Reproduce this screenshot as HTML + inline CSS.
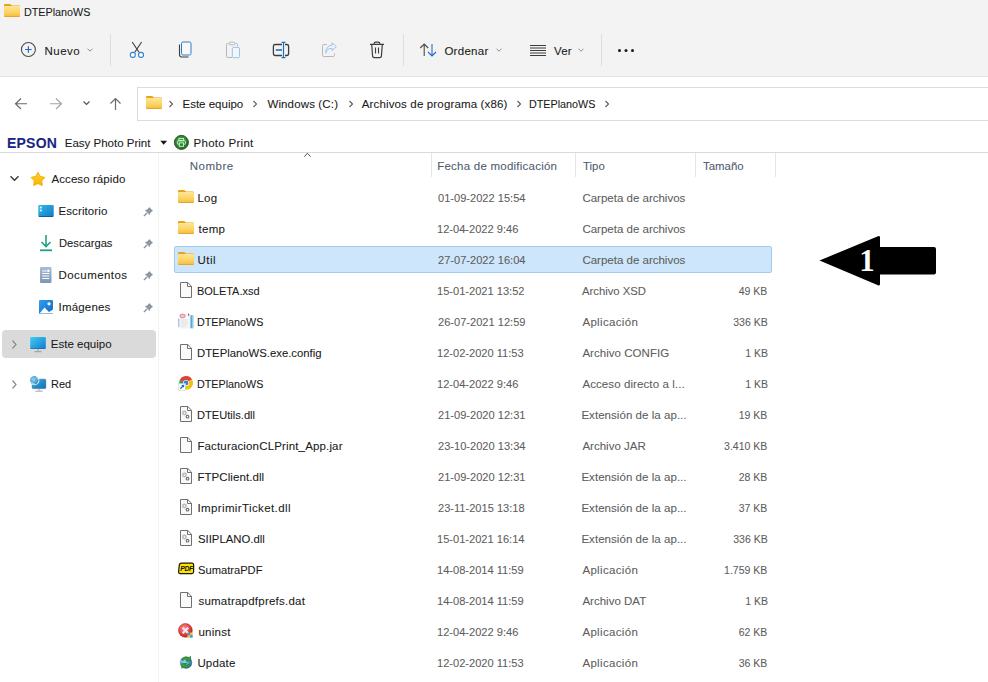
<!DOCTYPE html>
<html><head><meta charset="utf-8"><style>
html,body{margin:0;padding:0;width:988px;height:682px;overflow:hidden;background:#fff;position:relative;font-family:"Liberation Sans",sans-serif;font-size:12px;}
.t{position:absolute;white-space:pre;line-height:16px;font-family:"Liberation Sans",sans-serif;font-size:12px;-webkit-text-stroke:0.08px currentColor;}
.a{position:absolute;}
svg{position:absolute;overflow:visible;}

</style></head><body>
<!-- backgrounds -->
<div class="a" style="left:0;top:0;width:988px;height:76px;background:#f3f3f3"></div>
<div class="a" style="left:0;top:76px;width:988px;height:1px;background:#e3e3e3"></div>
<!-- toolbar separators -->
<div class="a" style="left:110px;top:34px;width:1px;height:32px;background:#dedede"></div>
<div class="a" style="left:403px;top:34px;width:1px;height:32px;background:#dedede"></div>
<div class="a" style="left:601px;top:34px;width:1px;height:32px;background:#dedede"></div>
<!-- address box -->
<div class="a" style="left:137px;top:87px;width:860px;height:32px;border:1px solid #dcdcdc;background:#fff"></div>
<!-- epson bar bottom -->
<div class="a" style="left:0;top:152px;width:988px;height:1px;background:#dadada"></div>
<!-- nav pane separator -->
<div class="a" style="left:158px;top:153px;width:1px;height:529px;background:#f3f3f3"></div>
<!-- este equipo highlight -->
<div class="a" style="left:2px;top:330px;width:154px;height:28px;background:#dadada;border-radius:4px"></div>
<!-- header column separators -->
<div class="a" style="left:431px;top:153px;width:1px;height:24px;background:#e5e5e5"></div>
<div class="a" style="left:575px;top:153px;width:1px;height:24px;background:#e5e5e5"></div>
<div class="a" style="left:695px;top:153px;width:1px;height:24px;background:#e5e5e5"></div>
<div class="a" style="left:775px;top:153px;width:1px;height:24px;background:#e5e5e5"></div>
<!-- selected row -->
<div class="a" style="left:174px;top:246px;width:596px;height:25px;background:#cde6fb;border:1px solid #a2cbee;border-radius:2px"></div>
<!-- shared defs -->
<svg width="0" height="0" style="left:0;top:0">
 <defs>
  <linearGradient id="fgrad" x1="0" y1="0" x2="0" y2="1"><stop offset="0" stop-color="#ffe596"/><stop offset="0.6" stop-color="#fbd25e"/><stop offset="1" stop-color="#f3bb3a"/></linearGradient>
  <symbol id="folder" viewBox="0 0 16 13">
   <path d="M0 1.3Q0 0 1.3 0H5.6Q6.4 0 7 .6L8 1.6H14.7Q16 1.6 16 2.9V4H0Z" fill="#e9a319"/>
   <rect x="0" y="2.1" width="16" height="10.9" rx="1.1" fill="url(#fgrad)"/>
   <rect x="0.3" y="12" width="15.4" height="1" rx=".5" fill="#dda032" opacity=".8"/>
  </symbol>
  <symbol id="blank" viewBox="0 0 16 16">
   <path d="M2.5 .5H9.8L13.5 4.2V15.5H2.5Z" fill="#fafafa" stroke="#707070" stroke-width="1"/>
   <path d="M9.5 .5V4.5H13.5" fill="none" stroke="#707070" stroke-width="1"/>
  </symbol>
  <symbol id="dll" viewBox="0 0 16 16">
   <path d="M2.5 .5H9.8L13.5 4.2V15.5H2.5Z" fill="#fafafa" stroke="#707070" stroke-width="1"/>
   <path d="M9.5 .5V4.5H13.5" fill="none" stroke="#707070" stroke-width="1"/>
   <circle cx="6.4" cy="7" r="2.4" fill="#b4b8bc"/><circle cx="6.4" cy="7" r=".9" fill="#f4f4f4"/>
   <circle cx="9.5" cy="10.7" r="1.9" fill="#707070"/><circle cx="9.5" cy="10.7" r=".8" fill="#fff"/>
  </symbol>
  <symbol id="pin" viewBox="-.3 -.3 10.6 10.6">
   <path d="M5.6 .6L9.4 4.4L8.3 4.9L6.6 6.6L6.5 8.6L1.4 3.5L3.4 3.4L5.1 1.7Z" fill="#8e969e"/>
   <path d="M3.6 6.4L.6 9.4" stroke="#8e969e" stroke-width="1.3"/>
  </symbol>
 </defs>
</svg>
<!-- title folder -->
<svg style="left:4px;top:4px" width="16" height="13"><use href="#folder"/></svg>
<!-- Nuevo icon -->
<svg style="left:20px;top:42px" width="16" height="16" viewBox="0 0 16 16">
 <circle cx="8.4" cy="7.5" r="7" fill="none" stroke="#4a4a4a" stroke-width="1.1"/>
 <path d="M8.4 4.2V10.8M5.1 7.5H11.7" stroke="#1f6fc0" stroke-width="1.2"/>
</svg>
<svg style="left:86px;top:47px" width="8" height="6" viewBox="0 0 8 6"><path d="M1.5 1.7L4 4.2L6.5 1.7" fill="none" stroke="#8c8c8c" stroke-width="1"/></svg>
<!-- cut -->
<svg style="left:128px;top:41px" width="18" height="18" viewBox="0 0 18 18">
 <path d="M4.2 1L11 11.2M13.6 1L6.8 11.2" stroke="#3d3d3d" stroke-width="1.1"/>
 <circle cx="4.8" cy="13.9" r="2.5" fill="#fff" stroke="#3282cc" stroke-width="1.1"/>
 <circle cx="13" cy="13.9" r="2.5" fill="#fff" stroke="#3282cc" stroke-width="1.1"/>
</svg>
<!-- copy -->
<svg style="left:178px;top:41px" width="16" height="18" viewBox="0 0 16 18">
 <path d="M1.5 3.5V13.8Q1.5 16 3.7 16H10.5" fill="none" stroke="#3d3d3d" stroke-width="1.1"/>
 <rect x="3.5" y="1" width="9.5" height="13" rx="1.6" fill="#f8f8f8" stroke="#2f7cc8" stroke-width="1"/>
</svg>
<!-- paste disabled -->
<svg style="left:225px;top:41px" width="16" height="18" viewBox="0 0 16 18">
 <path d="M3.5 2.5H2.6Q1.5 2.5 1.5 3.6V15.3Q1.5 16.5 2.6 16.5H7M10.5 2.5H11.4Q12.5 2.5 12.5 3.6V5.5" fill="none" stroke="#b5b5b5" stroke-width="1"/>
 <rect x="4" y="1.2" width="6" height="2.6" rx="1.2" fill="none" stroke="#b5b5b5" stroke-width="1"/>
 <rect x="7.3" y="6.4" width="7.2" height="10.3" rx="1.3" fill="#f0f6fc" stroke="#9cc3e6" stroke-width="1"/>
</svg>
<!-- rename -->
<svg style="left:272px;top:41px" width="18" height="18" viewBox="0 0 18 18">
 <path d="M10 3.5H3.2Q1.4 3.5 1.4 5.3V12.6Q1.4 14.5 3.2 14.5H10M13 3.5H14.8Q16.6 3.5 16.6 5.3V12.6Q16.6 14.5 14.8 14.5H13" fill="none" stroke="#3d3d3d" stroke-width="1.3"/>
 <path d="M11.5 1.3V16.7M9.6 1.3H13.4M9.6 16.7H13.4" stroke="#1f6fc0" stroke-width="1.2"/>
 <path d="M3.8 9H10" stroke="#1f6fc0" stroke-width="1.6"/>
</svg>
<!-- share disabled -->
<svg style="left:321px;top:42px" width="17" height="16" viewBox="0 0 17 16">
 <path d="M6 2.5H2.8Q1.5 2.5 1.5 3.8V13.2Q1.5 14.5 2.8 14.5H12.2Q13.5 14.5 13.5 13.2V11.5" fill="none" stroke="#b8b8b8" stroke-width="1"/>
 <path d="M4.8 11.2Q5.5 6.5 11 6.3V8.6L15.4 4.6L11 .8V3.1Q5 3.6 4.8 11.2Z" fill="#eef4fa" stroke="#9cc3e6" stroke-width="1"/>
</svg>
<!-- delete -->
<svg style="left:369px;top:41px" width="16" height="18" viewBox="0 0 16 18">
 <path d="M1 3.4H15M5.2 3.4V2.6Q5.2 1.2 6.6 1.2H9.4Q10.8 1.2 10.8 2.6V3.4" fill="none" stroke="#3d3d3d" stroke-width="1.2"/>
 <path d="M2.7 3.4L3.6 15.2Q3.8 16.6 5.2 16.6H10.8Q12.2 16.6 12.4 15.2L13.3 3.4" fill="none" stroke="#3d3d3d" stroke-width="1.2"/>
 <path d="M6.5 6.6V12.5M9.5 6.6V12.5" stroke="#3d3d3d" stroke-width="1.1"/>
</svg>
<!-- sort -->
<svg style="left:419px;top:42px" width="18" height="16" viewBox="0 0 18 16">
 <path d="M5.2 2V14M1.2 6L5.2 2L9.2 6" fill="none" stroke="#4a4a4a" stroke-width="1.1"/>
 <path d="M13 2V14M9 10L13 14L17 10" fill="none" stroke="#1f6fc0" stroke-width="1.1"/>
</svg>
<svg style="left:495px;top:47px" width="8" height="6" viewBox="0 0 8 6"><path d="M1.5 1.7L4 4.2L6.5 1.7" fill="none" stroke="#8c8c8c" stroke-width="1"/></svg>
<!-- view -->
<svg style="left:529px;top:44px" width="18" height="13" viewBox="0 0 18 13">
 <path d="M1 1.5H17M1 4H17M1 6.5H17M1 9H17M1 11.5H17" stroke="#3d3d3d" stroke-width="1"/>
</svg>
<svg style="left:577px;top:47px" width="8" height="6" viewBox="0 0 8 6"><path d="M1.5 1.7L4 4.2L6.5 1.7" fill="none" stroke="#8c8c8c" stroke-width="1"/></svg>
<!-- more -->
<svg style="left:616px;top:47px" width="20" height="7" viewBox="0 0 20 7">
 <circle cx="3.5" cy="3.5" r="1.5" fill="#1a1a1a"/><circle cx="10" cy="3.5" r="1.5" fill="#1a1a1a"/><circle cx="16.5" cy="3.5" r="1.5" fill="#1a1a1a"/>
</svg>
<!-- nav arrows -->
<svg style="left:13px;top:96px" width="16" height="16" viewBox="0 0 16 16">
 <path d="M2.5 7.75H14M8 2.5L2.5 7.75L8 13" fill="none" stroke="#6a6a6a" stroke-width="1.2"/>
</svg>
<svg style="left:48px;top:96px" width="16" height="16" viewBox="0 0 16 16">
 <path d="M2 7.75H13.5M8 2.5L13.5 7.75L8 13" fill="none" stroke="#a5a5a5" stroke-width="1.2"/>
</svg>
<svg style="left:81px;top:99px" width="10" height="8" viewBox="0 0 10 8">
 <path d="M2.5 2.5L5.5 5.5L8.5 2.5" fill="none" stroke="#555" stroke-width="1.2"/>
</svg>
<svg style="left:108px;top:96px" width="16" height="16" viewBox="0 0 16 16">
 <path d="M7.5 2.5V14M2.5 7.5L7.5 2.5L12.5 7.5" fill="none" stroke="#6a6a6a" stroke-width="1.2"/>
</svg>
<!-- address folder + chevrons -->
<svg style="left:146px;top:96px" width="16" height="13"><use href="#folder"/></svg>
<svg style="left:167px;top:100px" width="8" height="9" viewBox="0 0 8 9"><path d="M2.5 1L5.5 4L2.5 7" fill="none" stroke="#5a5a5a" stroke-width="1.1"/></svg>
<svg style="left:251px;top:100px" width="8" height="9" viewBox="0 0 8 9"><path d="M2.5 1L5.5 4L2.5 7" fill="none" stroke="#5a5a5a" stroke-width="1.1"/></svg>
<svg style="left:347px;top:100px" width="8" height="9" viewBox="0 0 8 9"><path d="M2.5 1L5.5 4L2.5 7" fill="none" stroke="#5a5a5a" stroke-width="1.1"/></svg>
<svg style="left:515px;top:100px" width="8" height="9" viewBox="0 0 8 9"><path d="M2.5 1L5.5 4L2.5 7" fill="none" stroke="#5a5a5a" stroke-width="1.1"/></svg>
<svg style="left:603px;top:100px" width="8" height="9" viewBox="0 0 8 9"><path d="M2.5 1L5.5 4L2.5 7" fill="none" stroke="#5a5a5a" stroke-width="1.1"/></svg>
<!-- epson triangle + printer -->
<svg style="left:160px;top:140px" width="8" height="6" viewBox="0 0 8 6"><path d="M.3 .8H7.1L3.7 4.8Z" fill="#1a1a1a"/></svg>
<svg style="left:173px;top:134px" width="17" height="17" viewBox="0 0 17 17">
 <defs><radialGradient id="gg" cx=".45" cy=".4" r=".65"><stop offset="0" stop-color="#3aa83a"/><stop offset="1" stop-color="#1f6e22"/></radialGradient></defs>
 <circle cx="8.4" cy="8.4" r="7" fill="url(#gg)" stroke="#2f4a30" stroke-width="1"/>
 <rect x="5.9" y="4.4" width="4.8" height="2.2" fill="none" stroke="#d6f4d6" stroke-width=".9"/>
 <rect x="4.4" y="6.8" width="8" height="3.4" rx=".6" fill="none" stroke="#d6f4d6" stroke-width=".9"/>
 <rect x="6.3" y="8.9" width="4.2" height="3.4" fill="#238a25" stroke="#d6f4d6" stroke-width=".9"/>
</svg>
<!-- nav pane icons -->
<svg style="left:9px;top:174px" width="11" height="8" viewBox="0 0 11 8"><path d="M1.5 2.3L5.5 6.3L9.5 2.3" fill="none" stroke="#333" stroke-width="1.3"/></svg>
<svg style="left:30px;top:171px" width="16" height="16" viewBox="0 0 16 16">
 <defs><linearGradient id="sg" x1="0" y1="0" x2="0" y2="1"><stop offset="0" stop-color="#ffd030"/><stop offset="1" stop-color="#f7b400"/></linearGradient></defs>
 <path d="M8.00 1.40L10.29 5.44L14.85 6.38L11.71 9.81L12.23 14.42L8.00 12.50L3.77 14.42L4.29 9.81L1.15 6.38L5.71 5.44Z" fill="url(#sg)" stroke="#f0b000" stroke-width="1" stroke-linejoin="round"/>
</svg>
<svg style="left:38px;top:204px" width="16" height="14" viewBox="0 0 16 14">
 <defs><linearGradient id="dg" x1="0" y1="0" x2="1" y2="1"><stop offset="0" stop-color="#2dbbe8"/><stop offset="1" stop-color="#1977c2"/></linearGradient></defs>
 <rect x=".3" y="1" width="15.4" height="12" rx="1.2" fill="url(#dg)"/>
 <rect x="1.8" y="2.6" width="2" height="1.8" fill="#e8f6ff"/><rect x="1.8" y="5.6" width="2" height="1.8" fill="#e8f6ff"/>
 <rect x="1" y="12" width="14" height="1" fill="#0f5aa8"/>
</svg>
<svg style="left:39px;top:234px" width="14" height="18" viewBox="0 0 14 18">
 <path d="M7 1V12.5M2.5 8L7 12.5L11.5 8" fill="none" stroke="#22a08a" stroke-width="1.6"/>
 <path d="M1 16.3H13" stroke="#1f9f88" stroke-width="1.8"/>
</svg>
<svg style="left:39px;top:266px" width="14" height="18" viewBox="0 0 14 18">
 <defs><linearGradient id="docg" x1="0" y1="0" x2="0" y2="1"><stop offset="0" stop-color="#a9bcd6"/><stop offset="1" stop-color="#7d95b8"/></linearGradient></defs>
 <rect x="1" y="1" width="11.5" height="16" rx="1" fill="url(#docg)"/>
 <path d="M3.3 5H7.5M3.3 7.5H10.2M3.3 10H10.2M3.3 12.5H10.2" stroke="#fff" stroke-width="1"/>
 <rect x="8.3" y="3.6" width="2.2" height="2.4" fill="#fff"/>
</svg>
<svg style="left:38px;top:299px" width="16" height="16" viewBox="0 0 16 16">
 <defs><linearGradient id="pg" x1="0" y1="0" x2="1" y2="1"><stop offset="0" stop-color="#2fa0ee"/><stop offset="1" stop-color="#1168c4"/></linearGradient></defs>
 <rect x="1" y="1" width="14" height="14" rx="1" fill="url(#pg)"/>
 <path d="M1.5 14.5L6.5 8.5L11 13L15 10.5V14.5Z" fill="#fff"/>
 <circle cx="11" cy="4.8" r="1.6" fill="#fff"/>
</svg>
<svg style="left:142.5px;top:205.5px" width="11" height="11"><use href="#pin"/></svg>
<svg style="left:142.5px;top:237.5px" width="11" height="11"><use href="#pin"/></svg>
<svg style="left:142.5px;top:269.5px" width="11" height="11"><use href="#pin"/></svg>
<svg style="left:142.5px;top:301.5px" width="11" height="11"><use href="#pin"/></svg>
<svg style="left:10px;top:339px" width="8" height="11" viewBox="0 0 8 11"><path d="M2.5 1.5L6 5.5L2.5 9.5" fill="none" stroke="#8a8a8a" stroke-width="1.2"/></svg>
<svg style="left:10px;top:379px" width="8" height="11" viewBox="0 0 8 11"><path d="M2.5 1.5L6 5.5L2.5 9.5" fill="none" stroke="#8a8a8a" stroke-width="1.2"/></svg>
<svg style="left:30px;top:336px" width="16" height="17" viewBox="0 0 16 17">
 <defs><linearGradient id="mg" x1="0" y1="0" x2="1" y2="1"><stop offset="0" stop-color="#40cdf0"/><stop offset="1" stop-color="#137bd0"/></linearGradient></defs>
 <rect x=".2" y="1" width="15.6" height="11.8" rx="1.2" fill="url(#mg)"/>
 <rect x=".5" y="12" width="15" height="1" fill="#0e62b0" opacity=".7"/>
 <path d="M8 13V15.5M4.5 15.6H11.5" stroke="#9aa8b4" stroke-width="1.1"/>
</svg>
<svg style="left:29px;top:375px" width="18" height="18" viewBox="0 0 18 18">
 <defs><linearGradient id="ng" x1="0" y1="0" x2="1" y2="1"><stop offset="0" stop-color="#36b2e2"/><stop offset="1" stop-color="#176cb0"/></linearGradient>
 <radialGradient id="glb" cx=".4" cy=".4" r=".7"><stop offset="0" stop-color="#8ed4f4"/><stop offset="1" stop-color="#2f7fbf"/></radialGradient></defs>
 <rect x="3.2" y="4.2" width="13.6" height="9.4" rx="1" fill="url(#ng)" stroke="#1b64a0" stroke-width=".5"/>
 <path d="M10 13.8V15.6M6.4 16.2H13.6" stroke="#9aa6b2" stroke-width="1"/>
 <circle cx="5.3" cy="5.3" r="5" fill="#fff"/>
 <circle cx="5.3" cy="5.3" r="4.2" fill="url(#glb)"/>
 <path d="M2.5 7.5Q4 9 6 9.3M7.5 2Q8.5 3 8.6 4" fill="none" stroke="#c8ecff" stroke-width="1"/>
</svg>
<!-- sort indicator -->
<svg style="left:302px;top:151px" width="11" height="8" viewBox="0 0 11 8"><path d="M2.4 5.7L5.4 2.2L8.7 5.7" fill="none" stroke="#555" stroke-width="1"/></svg>
<!-- file icons -->
<svg style="left:178px;top:190px" width="16" height="13"><use href="#folder"/></svg>
<svg style="left:178px;top:221px" width="16" height="13"><use href="#folder"/></svg>
<svg style="left:178px;top:252px" width="16" height="13"><use href="#folder"/></svg>
<svg style="left:178px;top:282px" width="16" height="16"><use href="#blank"/></svg>
<svg style="left:178px;top:313px" width="16" height="16" viewBox="0 0 16 16">
 <path d="M2 1.5H12V15H2Z" fill="#f9f9fa" stroke="#e2e6ea" stroke-width=".6"/>
 <path d="M3 7H10M3 9H10M3 11H10M3 13H9" stroke="#dcd4d8" stroke-width=".8"/>
 <ellipse cx="4.6" cy="3" rx="2.6" ry="1.9" fill="#f3c4cc" stroke="#e27c8c" stroke-width=".9"/>
 <rect x="12" y="2" width="3.6" height="13.5" rx="1" fill="#93cdea"/>
 <path d="M13.5 2.5V15" stroke="#4d9fce" stroke-width=".8"/>
 <path d="M.8 5.5V14" stroke="#78aec6" stroke-width=".9"/>
 <path d="M10.6 .5V2.8" stroke="#666" stroke-width="1"/>
</svg>
<svg style="left:178px;top:344px" width="16" height="16"><use href="#blank"/></svg>
<svg style="left:178px;top:375px" width="16" height="16" viewBox="0 0 16 16">
 <path d="M8.1 7.9L1.62 5.54A6.9 6.9 0 0 1 14.08 4.45Z" fill="#db4437"/>
 <path d="M8.1 7.9L14.08 4.45A6.9 6.9 0 0 1 7.50 14.77Z" fill="#f4c20d"/>
 <path d="M8.1 7.9L7.50 14.77A6.9 6.9 0 0 1 1.62 5.54Z" fill="#1e9e4a"/>
 <circle cx="8.1" cy="7.9" r="3" fill="#fff"/>
 <circle cx="8.1" cy="7.9" r="2.4" fill="#3b7de0"/>
 <rect x=".5" y="8.6" width="6.9" height="6.9" fill="#fbfdff" stroke="#c9d3dc" stroke-width=".6"/>
 <path d="M2.3 13.7L4.9 11.1" stroke="#1f6fc0" stroke-width="1.3"/>
 <path d="M6.3 9.7L3.2 10.1L5.9 12.8Z" fill="#1f6fc0"/>
</svg>
<svg style="left:178px;top:406px" width="16" height="16"><use href="#dll"/></svg>
<svg style="left:178px;top:437px" width="16" height="16"><use href="#blank"/></svg>
<svg style="left:178px;top:468px" width="16" height="16"><use href="#dll"/></svg>
<svg style="left:178px;top:499px" width="16" height="16"><use href="#dll"/></svg>
<svg style="left:178px;top:530px" width="16" height="16"><use href="#dll"/></svg>
<svg style="left:178px;top:562px" width="16" height="13" viewBox="0 0 16 13">
 <path d="M3.5 1.2H14Q15.6 1.2 15.6 2.8V9.8Q15.6 11.6 13.8 11.6H2.2Q.5 11.6 .6 9.8L1.2 4Q1.4 1.2 3.5 1.2Z" fill="#ffe400" stroke="#1a1a00" stroke-width="1.2"/>
 <text x="8.6" y="9.3" font-family="Liberation Sans" font-weight="bold" font-style="italic" font-size="6.8" text-anchor="middle" fill="#111" letter-spacing="-.3">PDF</text>
</svg>
<svg style="left:178px;top:592px" width="16" height="16"><use href="#blank"/></svg>
<svg style="left:178px;top:623px" width="16" height="16" viewBox="0 0 16 16">
 <defs><radialGradient id="ug" cx=".4" cy=".35" r=".7"><stop offset="0" stop-color="#ff8a8a"/><stop offset="1" stop-color="#c81818"/></radialGradient></defs>
 <circle cx="7.4" cy="7.4" r="6.9" fill="url(#ug)" stroke="#a81515" stroke-width=".5"/>
 <path d="M4.6 4.6L10.2 10.2M10.2 4.6L4.6 10.2" stroke="#e8e8e8" stroke-width="2.2"/>
 <rect x="9.5" y="9.5" width="2.6" height="2.6" fill="#3a9ad8"/><rect x="12.1" y="9.5" width="2.6" height="2.6" fill="#f4c430"/>
 <rect x="9.5" y="12.1" width="2.6" height="2.6" fill="#f4c430"/><rect x="12.1" y="12.1" width="2.6" height="2.6" fill="#3a9ad8"/>
</svg>
<svg style="left:178px;top:654px" width="16" height="16" viewBox="0 0 16 16">
 <defs><radialGradient id="upg" cx=".35" cy=".4" r=".7"><stop offset="0" stop-color="#9ad6f0"/><stop offset="1" stop-color="#1f6ea8"/></radialGradient></defs>
 <circle cx="8" cy="8.6" r="6.2" fill="url(#upg)"/>
 <path d="M3.5 5.5Q6.5 1.5 11.5 3.5L12.5 2V7H8L10 5.4Q7 4.5 5 6.5Z" fill="#3aa83a" stroke="#1a5a1a" stroke-width=".5"/>
 <path d="M12.8 10.8Q10 14.8 4.8 13L3.8 14.5V9.6H8.4L6.5 11.3Q9.5 12 11.4 10Z" fill="#3aa83a" stroke="#1a5a1a" stroke-width=".5"/>
</svg>
<!-- black arrow -->
<svg style="left:0;top:0" width="988" height="682" viewBox="0 0 988 682">
 <path d="M819.5 260.5L878 236.2Q880 235.6 880 237.5V247H934Q936 247 936 249V272.6Q936 274.6 934 274.6H880V284Q880 286 878 285.3Z" fill="#000"/>
 <text x="859.2" y="271.1" font-family="Liberation Serif" font-weight="bold" font-size="31" fill="#fff">1</text>
</svg>

<span class="t" style="top:3.72px;color:#1a1a1a;transform:scaleX(0.9357);transform-origin:left center;font-size:11.5px;left:23.56px;">DTEPlanoWS</span>
<span class="t" style="top:43.42px;color:#1a1a1a;letter-spacing:0.520px;font-size:11.5px;left:44.40px;">Nuevo</span>
<span class="t" style="top:43.42px;color:#1a1a1a;letter-spacing:0.286px;font-size:11.5px;left:444.40px;">Ordenar</span>
<span class="t" style="top:43.42px;color:#1a1a1a;letter-spacing:0.100px;font-size:11.5px;left:554.00px;">Ver</span>
<span class="t" style="top:95.92px;color:#1a1a1a;letter-spacing:0.000px;font-size:11.5px;left:182.50px;">Este equipo</span>
<span class="t" style="top:95.92px;color:#1a1a1a;letter-spacing:0.142px;font-size:11.5px;left:267.40px;">Windows (C:)</span>
<span class="t" style="top:95.92px;color:#1a1a1a;letter-spacing:0.154px;font-size:11.5px;left:361.70px;">Archivos de programa (x86)</span>
<span class="t" style="top:95.92px;color:#1a1a1a;transform:scaleX(0.9357);transform-origin:left center;font-size:11.5px;left:529.36px;">DTEPlanoWS</span>
<span class="t" style="top:134.85px;color:#1a2682;letter-spacing:0.260px;font-size:14px;font-weight:bold;left:6.90px;">EPSON</span>
<span class="t" style="top:134.72px;color:#1a1a1a;letter-spacing:0.000px;font-size:11.5px;left:64.80px;">Easy Photo Print</span>
<span class="t" style="top:134.72px;color:#1a1a1a;letter-spacing:0.291px;font-size:11.5px;left:193.50px;">Photo Print</span>
<span class="t" style="top:170.72px;color:#1a1a1a;letter-spacing:0.077px;font-size:11.5px;left:51.50px;">Acceso rápido</span>
<span class="t" style="top:202.72px;color:#1a1a1a;letter-spacing:0.100px;font-size:11.5px;left:58.50px;">Escritorio</span>
<span class="t" style="top:234.72px;color:#1a1a1a;transform:scaleX(0.9722);transform-origin:left center;font-size:11.5px;left:58.53px;">Descargas</span>
<span class="t" style="top:266.72px;color:#1a1a1a;letter-spacing:0.450px;font-size:11.5px;left:58.50px;">Documentos</span>
<span class="t" style="top:298.72px;color:#1a1a1a;letter-spacing:0.188px;font-size:11.5px;left:58.50px;">Imágenes</span>
<span class="t" style="top:335.62px;color:#1a1a1a;letter-spacing:0.000px;font-size:11.5px;left:50.80px;">Este equipo</span>
<span class="t" style="top:375.62px;color:#1a1a1a;transform:scaleX(0.9500);transform-origin:left center;font-size:11.5px;left:50.85px;">Red</span>
<span class="t" style="top:157.77px;color:#4e5b70;letter-spacing:0.500px;font-size:11.5px;left:189.80px;">Nombre</span>
<span class="t" style="top:157.77px;color:#4e5b70;letter-spacing:0.238px;font-size:11.5px;left:437.20px;">Fecha de modificación</span>
<span class="t" style="top:157.77px;color:#4e5b70;transform:scaleX(0.9913);transform-origin:left center;font-size:11.5px;left:582.60px;">Tipo</span>
<span class="t" style="top:157.77px;color:#4e5b70;transform:scaleX(0.9913);transform-origin:left center;font-size:11.5px;left:703.00px;">Tamaño</span>
<span class="t" style="top:190.02px;color:#1a1a1a;letter-spacing:0.333px;font-size:11.5px;left:197.40px;">Log</span>
<span class="t" style="top:190.02px;color:#5d5d5d;transform:scaleX(0.9631);transform-origin:left center;font-size:11.5px;left:438.20px;">01-09-2022 15:54</span>
<span class="t" style="top:190.02px;color:#5d5d5d;letter-spacing:0.000px;font-size:11.5px;left:582.40px;">Carpeta de archivos</span>
<span class="t" style="top:221.02px;color:#1a1a1a;letter-spacing:0.350px;font-size:11.5px;left:198.40px;">temp</span>
<span class="t" style="top:221.02px;color:#5d5d5d;transform:scaleX(0.9631);transform-origin:left center;font-size:11.5px;left:437.24px;">12-04-2022 9:46</span>
<span class="t" style="top:221.02px;color:#5d5d5d;letter-spacing:0.000px;font-size:11.5px;left:582.40px;">Carpeta de archivos</span>
<span class="t" style="top:252.02px;color:#1a1a1a;letter-spacing:0.500px;font-size:11.5px;left:197.40px;">Util</span>
<span class="t" style="top:252.02px;color:#5d5d5d;transform:scaleX(0.9631);transform-origin:left center;font-size:11.5px;left:438.20px;">27-07-2022 16:04</span>
<span class="t" style="top:252.02px;color:#5d5d5d;letter-spacing:0.000px;font-size:11.5px;left:582.40px;">Carpeta de archivos</span>
<span class="t" style="top:283.02px;color:#1a1a1a;transform:scaleX(0.9531);transform-origin:left center;font-size:11.5px;left:197.45px;">BOLETA.xsd</span>
<span class="t" style="top:283.02px;color:#5d5d5d;transform:scaleX(0.9631);transform-origin:left center;font-size:11.5px;left:437.24px;">15-01-2021 13:52</span>
<span class="t" style="top:283.02px;color:#5d5d5d;transform:scaleX(0.9800);transform-origin:left center;font-size:11.5px;left:582.40px;">Archivo XSD</span>
<span class="t" style="top:283.02px;color:#5d5d5d;transform:scaleX(0.9130);transform-origin:right center;font-size:11.5px;right:220.40px;">49 KB</span>
<span class="t" style="top:314.02px;color:#1a1a1a;transform:scaleX(0.9357);transform-origin:left center;font-size:11.5px;left:197.46px;">DTEPlanoWS</span>
<span class="t" style="top:314.02px;color:#5d5d5d;transform:scaleX(0.9631);transform-origin:left center;font-size:11.5px;left:438.20px;">26-07-2021 12:59</span>
<span class="t" style="top:314.02px;color:#5d5d5d;letter-spacing:0.330px;font-size:11.5px;left:582.40px;">Aplicación</span>
<span class="t" style="top:314.02px;color:#5d5d5d;transform:scaleX(0.9130);transform-origin:right center;font-size:11.5px;right:220.40px;">336 KB</span>
<span class="t" style="top:345.02px;color:#1a1a1a;transform:scaleX(0.9840);transform-origin:left center;font-size:11.5px;left:197.42px;">DTEPlanoWS.exe.config</span>
<span class="t" style="top:345.02px;color:#5d5d5d;transform:scaleX(0.9631);transform-origin:left center;font-size:11.5px;left:437.24px;">12-02-2020 11:53</span>
<span class="t" style="top:345.02px;color:#5d5d5d;letter-spacing:0.036px;font-size:11.5px;left:582.40px;">Archivo CONFIG</span>
<span class="t" style="top:345.02px;color:#5d5d5d;transform:scaleX(0.9130);transform-origin:right center;font-size:11.5px;right:220.40px;">1 KB</span>
<span class="t" style="top:376.02px;color:#1a1a1a;transform:scaleX(0.9357);transform-origin:left center;font-size:11.5px;left:197.46px;">DTEPlanoWS</span>
<span class="t" style="top:376.02px;color:#5d5d5d;transform:scaleX(0.9631);transform-origin:left center;font-size:11.5px;left:437.24px;">12-04-2022 9:46</span>
<span class="t" style="top:376.02px;color:#5d5d5d;letter-spacing:0.095px;font-size:11.5px;left:582.40px;">Acceso directo a l...</span>
<span class="t" style="top:376.02px;color:#5d5d5d;transform:scaleX(0.9130);transform-origin:right center;font-size:11.5px;right:220.40px;">1 KB</span>
<span class="t" style="top:407.02px;color:#1a1a1a;transform:scaleX(0.9661);transform-origin:left center;font-size:11.5px;left:197.43px;">DTEUtils.dll</span>
<span class="t" style="top:407.02px;color:#5d5d5d;transform:scaleX(0.9631);transform-origin:left center;font-size:11.5px;left:438.20px;">21-09-2020 12:31</span>
<span class="t" style="top:407.02px;color:#5d5d5d;letter-spacing:0.048px;font-size:11.5px;left:581.40px;">Extensión de la ap...</span>
<span class="t" style="top:407.02px;color:#5d5d5d;transform:scaleX(0.9130);transform-origin:right center;font-size:11.5px;right:220.40px;">19 KB</span>
<span class="t" style="top:438.02px;color:#1a1a1a;letter-spacing:0.154px;font-size:11.5px;left:197.40px;">FacturacionCLPrint_App.jar</span>
<span class="t" style="top:438.02px;color:#5d5d5d;transform:scaleX(0.9631);transform-origin:left center;font-size:11.5px;left:438.20px;">23-10-2020 13:34</span>
<span class="t" style="top:438.02px;color:#5d5d5d;letter-spacing:0.010px;font-size:11.5px;left:582.40px;">Archivo JAR</span>
<span class="t" style="top:438.02px;color:#5d5d5d;transform:scaleX(0.9130);transform-origin:right center;font-size:11.5px;right:220.40px;">3.410 KB</span>
<span class="t" style="top:469.02px;color:#1a1a1a;letter-spacing:0.077px;font-size:11.5px;left:197.40px;">FTPClient.dll</span>
<span class="t" style="top:469.02px;color:#5d5d5d;transform:scaleX(0.9631);transform-origin:left center;font-size:11.5px;left:438.20px;">21-09-2020 12:31</span>
<span class="t" style="top:469.02px;color:#5d5d5d;letter-spacing:0.048px;font-size:11.5px;left:581.40px;">Extensión de la ap...</span>
<span class="t" style="top:469.02px;color:#5d5d5d;transform:scaleX(0.9130);transform-origin:right center;font-size:11.5px;right:220.40px;">28 KB</span>
<span class="t" style="top:500.02px;color:#1a1a1a;letter-spacing:0.389px;font-size:11.5px;left:197.40px;">ImprimirTicket.dll</span>
<span class="t" style="top:500.02px;color:#5d5d5d;transform:scaleX(0.9631);transform-origin:left center;font-size:11.5px;left:438.20px;">23-11-2015 13:18</span>
<span class="t" style="top:500.02px;color:#5d5d5d;letter-spacing:0.048px;font-size:11.5px;left:581.40px;">Extensión de la ap...</span>
<span class="t" style="top:500.02px;color:#5d5d5d;transform:scaleX(0.9130);transform-origin:right center;font-size:11.5px;right:220.40px;">37 KB</span>
<span class="t" style="top:531.02px;color:#1a1a1a;transform:scaleX(0.9851);transform-origin:left center;font-size:11.5px;left:198.40px;">SIIPLANO.dll</span>
<span class="t" style="top:531.02px;color:#5d5d5d;transform:scaleX(0.9631);transform-origin:left center;font-size:11.5px;left:437.24px;">15-01-2021 16:14</span>
<span class="t" style="top:531.02px;color:#5d5d5d;letter-spacing:0.048px;font-size:11.5px;left:581.40px;">Extensión de la ap...</span>
<span class="t" style="top:531.02px;color:#5d5d5d;transform:scaleX(0.9130);transform-origin:right center;font-size:11.5px;right:220.40px;">336 KB</span>
<span class="t" style="top:562.02px;color:#1a1a1a;transform:scaleX(0.9697);transform-origin:left center;font-size:11.5px;left:198.40px;">SumatraPDF</span>
<span class="t" style="top:562.02px;color:#5d5d5d;transform:scaleX(0.9631);transform-origin:left center;font-size:11.5px;left:437.24px;">14-08-2014 11:59</span>
<span class="t" style="top:562.02px;color:#5d5d5d;letter-spacing:0.330px;font-size:11.5px;left:582.40px;">Aplicación</span>
<span class="t" style="top:562.02px;color:#5d5d5d;transform:scaleX(0.9130);transform-origin:right center;font-size:11.5px;right:220.40px;">1.759 KB</span>
<span class="t" style="top:593.02px;color:#1a1a1a;letter-spacing:0.237px;font-size:11.5px;left:198.40px;">sumatrapdfprefs.dat</span>
<span class="t" style="top:593.02px;color:#5d5d5d;transform:scaleX(0.9631);transform-origin:left center;font-size:11.5px;left:437.24px;">14-08-2014 11:59</span>
<span class="t" style="top:593.02px;color:#5d5d5d;letter-spacing:0.010px;font-size:11.5px;left:582.40px;">Archivo DAT</span>
<span class="t" style="top:593.02px;color:#5d5d5d;transform:scaleX(0.9130);transform-origin:right center;font-size:11.5px;right:220.40px;">1 KB</span>
<span class="t" style="top:624.02px;color:#1a1a1a;letter-spacing:0.250px;font-size:11.5px;left:198.40px;">uninst</span>
<span class="t" style="top:624.02px;color:#5d5d5d;transform:scaleX(0.9631);transform-origin:left center;font-size:11.5px;left:437.24px;">12-04-2022 9:46</span>
<span class="t" style="top:624.02px;color:#5d5d5d;letter-spacing:0.330px;font-size:11.5px;left:582.40px;">Aplicación</span>
<span class="t" style="top:624.02px;color:#5d5d5d;transform:scaleX(0.9130);transform-origin:right center;font-size:11.5px;right:220.40px;">62 KB</span>
<span class="t" style="top:655.02px;color:#1a1a1a;letter-spacing:0.167px;font-size:11.5px;left:197.40px;">Update</span>
<span class="t" style="top:655.02px;color:#5d5d5d;transform:scaleX(0.9631);transform-origin:left center;font-size:11.5px;left:437.24px;">12-02-2020 11:53</span>
<span class="t" style="top:655.02px;color:#5d5d5d;letter-spacing:0.330px;font-size:11.5px;left:582.40px;">Aplicación</span>
<span class="t" style="top:655.02px;color:#5d5d5d;transform:scaleX(0.9130);transform-origin:right center;font-size:11.5px;right:220.40px;">36 KB</span>
</body></html>
